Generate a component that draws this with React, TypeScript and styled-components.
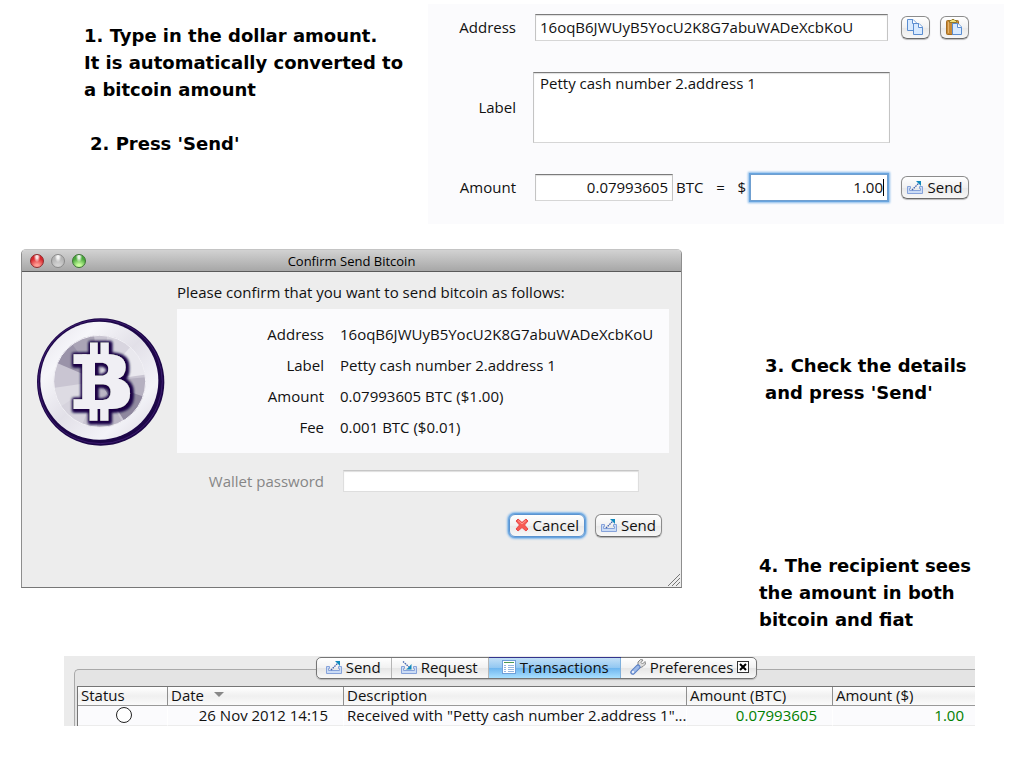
import React, { useId } from 'react';
import styled, { createGlobalStyle, css } from 'styled-components';

const GlobalStyle = createGlobalStyle`
  *, *::before, *::after { box-sizing: border-box; }
  body { margin: 0; background: #fff; color: #111; font: 15px/20px "Open Sans", "Noto Sans", sans-serif; }
  input, textarea, button { font: inherit; color: inherit; margin: 0; }
  svg { display: block; flex: none; }
`;

/* ---------- layout ---------- */

const Page = styled.main`
  padding: 4px 20px 42px 21px;
`;

const SendStep = styled.section`
  display: flex;
`;

const SendNotes = styled.div`
  flex: 0 0 407px;
  padding: 18px 0 0 63px;
`;

const Note = styled.p<{ $indent?: number; $top?: number }>`
  margin: ${p => p.$top || 0}px 0 0 ${p => p.$indent || 0}px;
  font: bold 18px/27px "DejaVu Sans", Verdana, sans-serif;
  color: #000;
`;

const ConfirmStep = styled.section`
  display: flex;
  align-items: flex-start;
  margin-top: 25px;
`;

const ConfirmNotes = styled.div`
  flex: 1;
  padding: 103px 0 0 77px;
`;

/* ---------- shared controls ---------- */

const PushButton = styled.button<{ $focus?: boolean }>`
  display: flex;
  align-items: center;
  justify-content: center;
  gap: 4px;
  height: 23px;
  padding: 0 5px 1px;
  border: 1px solid #8c8c8c;
  border-bottom-color: #6a6a6a;
  border-radius: 6px;
  background: linear-gradient(#fff, #f1f1f1 50%, #e9e9e9 52%, #f7f7f7);
  box-shadow: 0 1px 1px #0004;
  white-space: nowrap;
  ${p => p.$focus && css`
    border-color: #5b93cf;
    box-shadow: 0 0 0 1px #69a5df, 0 0 2px 2px #86b9ea;
  `}
`;

const field = css`
  border: 1px solid #c4c4c4;
  border-top-color: #7b7b7b;
  border-bottom-color: #d6d6d6;
  border-radius: 0;
  outline: none;
  background: #fff;
  box-shadow: inset 0 1px 1px #0002;
`;

const TextField = styled.input<{ $right?: boolean; $focus?: boolean }>`
  ${field}
  width: 100%;
  min-width: 0;
  height: 27px;
  padding: 0 4px 2px;
  text-align: ${p => (p.$right ? 'right' : 'left')};
  ${p => p.$focus && css`
    border-color: #6f9fd0;
    box-shadow: 0 0 0 1px #69a5df, 0 0 2px 2px #86b9ea;
  `}
`;

/* ---------- send form ---------- */

const SendForm = styled.form`
  flex: 1;
  display: grid;
  grid-template-columns: 88px minmax(0, 1fr) 68px;
  gap: 31px 0;
  align-items: center;
  padding: 10px 35px 23px 0;
  background: #fbfbfd;
`;

const FormLabel = styled.label`
  padding-bottom: 2px;
  text-align: right;
`;

const FieldCell = styled.div<{ $wide?: boolean }>`
  display: flex;
  align-items: center;
  margin: 0 ${p => (p.$wide ? 11 : 13)}px 0 ${p => (p.$wide ? 17 : 19)}px;
`;

const LabelArea = styled.textarea`
  ${field}
  width: 100%;
  height: 71px;
  padding: 0 6px;
  resize: none;
`;

const AmountBox = styled.div`
  flex: 0 0 138px;
`;

const Units = styled.span`
  flex: none;
  display: flex;
  justify-content: space-between;
  width: 70px;
  margin: 0 4px 0 3px;
  padding-bottom: 2px;
`;

const FocusBox = styled.div`
  position: relative;
  flex: 1;
  min-width: 0;
  &::after {
    content: "";
    position: absolute;
    right: 4px;
    top: 5px;
    width: 1px;
    height: 17px;
    background: #000;
  }
`;

const ButtonPair = styled.div`
  display: flex;
  justify-content: space-between;
`;

/* ---------- confirm dialog ---------- */

const Dialog = styled.div`
  flex: 0 1 661px;
  position: relative;
  border: 1px solid #8e8e8e;
  border-bottom-color: #777;
  border-top-color: #c4c4c4;
  border-radius: 5px 5px 0 0;
  background: #ededed;
`;

const TitleBar = styled.header`
  display: grid;
  grid-template-columns: 1fr auto 1fr;
  align-items: center;
  height: 22px;
  padding: 0 8px;
  border-bottom: 1px solid #5a5a5a;
  border-radius: 4px 4px 0 0;
  background: linear-gradient(#d2d2d2, #a7a7a7);
`;

const DialogTitle = styled.h2`
  margin: 0;
  font-size: 13px;
  font-weight: normal;
  color: #000;
`;

const Lights = styled.div`
  display: flex;
  gap: 7px;
`;

const Light = styled.button<{ $color: string; $glow: string; $edge: string }>`
  width: 14px;
  height: 14px;
  padding: 0;
  border: 1px solid ${p => p.$edge};
  border-radius: 50%;
  background:
    radial-gradient(ellipse at 50% 15%, #fffd 0 12%, #fff0 38%),
    radial-gradient(circle at 50% 95%, ${p => p.$glow} 0 15%, ${p => p.$color} 65%);
`;

const DialogBody = styled.div`
  display: flex;
  padding: 0 12px 50px 15px;
`;

const LogoBox = styled.div`
  flex: 0 0 140px;
  padding-top: 46px;
`;

const DialogMain = styled.div`
  flex: 1;
  min-width: 0;
`;

const Prompt = styled.p`
  margin: 10px 0 7px;
`;

const Details = styled.dl`
  display: grid;
  grid-template-columns: 147px 1fr;
  column-gap: 16px;
  margin: 0;
  padding: 10px 0;
  background: #fbfbfd;
  line-height: 31px;
  dt { text-align: right; }
  dd { margin: 0; white-space: nowrap; }
`;

const PasswordRow = styled.div`
  display: grid;
  grid-template-columns: 147px 1fr;
  column-gap: 19px;
  align-items: center;
  margin-top: 17px;
  padding-right: 30px;
  color: #868686;
  label { padding: 0; }
  input {
    height: 22px;
    border-color: #dedede;
    border-top-color: #c6c6c6;
  }
`;

const DialogActions = styled.div`
  display: flex;
  justify-content: flex-end;
  gap: 10px;
  margin-top: 22px;
  padding-right: 7px;
`;

const Grip = styled.svg`
  position: absolute;
  right: 1px;
  bottom: 1px;
`;

/* ---------- transactions ---------- */

const Wallet = styled.section`
  margin: 23px 29px 0 43px;
  padding: 13px 0 0 10px;
  background: #ebebeb;
`;

const Pane = styled.div`
  border: solid #a9a9a9;
  border-width: 1px 0 0 1px;
  border-radius: 5px 0 0 0;
  padding-left: 2px;
  background: #e4e4e4;
`;

const TabBar = styled.nav`
  display: flex;
  width: max-content;
  height: 22px;
  margin: -13px auto 0;
  border: 1px solid #757575;
  border-radius: 5px;
  background: linear-gradient(#fff, #f1f1f1 50%, #e6e6e6 52%, #f8f8f8);
  box-shadow: 0 1px 1px #0003;
`;

const TabRow = styled.div`
  padding: 0 0 7px 21px;
`;

const Tab = styled.button<{ $active?: boolean }>`
  display: flex;
  align-items: center;
  gap: 4px;
  height: 20px;
  padding: 0 10px 2px 9px;
  border: 0;
  border-right: 1px solid #b5b5b5;
  background: none;
  line-height: 18px;
  white-space: nowrap;
  &:last-child { border-right: 0; padding-right: 7px; }
  ${p => p.$active && css`
    padding: 0 11px 2px 13px;
    border-color: #7fb0dc;
    background: linear-gradient(#c3e0f7, #93c8f2 48%, #6fb6ef 52%, #a9e0ff);
    box-shadow: 0 -1px 0 #34348c;
  `}
`;

const Ledger = styled.table`
  width: 100%;
  border-collapse: separate;
  border-spacing: 0;
  table-layout: fixed;
  border: solid #757575;
  border-width: 1px 0 0 1px;
  background: #fff;
  th, td {
    height: 19px;
    padding: 0 0 2px 3px;
    font-weight: normal;
    line-height: 16px;
    text-align: left;
    white-space: nowrap;
  }
  th {
    border-bottom: 1px solid #999;
    border-right: 1px solid #8f8f8f;
    background: linear-gradient(#fff, #f0f0f0 50%, #fafafa);
  }
  td {
    height: 20px;
    border-bottom: 1px solid #ececec;
    border-right: 1px solid #fff;
    background: #fbfbfd;
  }
  th:last-child, td:last-child { border-right: 0; }
`;

const Column = styled.col<{ $width?: number }>`
  width: ${p => (p.$width ? `${p.$width}px` : 'auto')};
`;

const NumberCell = styled.td<{ $pad: number; $green?: boolean }>`
  && {
    padding-right: ${p => p.$pad}px;
    text-align: right;
    color: ${p => (p.$green ? '#008000' : '#111')};
  }
`;

const StatusDot = styled.span`
  display: block;
  width: 16px;
  height: 16px;
  margin: 0 auto;
  border: 1px solid #222;
  border-radius: 50%;
  background: #fff;
`;

const SortMark = styled.span`
  display: inline-block;
  margin-left: 10px;
  vertical-align: 4px;
  border: solid transparent;
  border-width: 5px 5px 0;
  border-top-color: #888;
`;

/* ---------- drawings ---------- */

const Tray = () => (
  <path d="M.5 7.500V14.500H15.500V7.500H12.500V9.500H13.500V11.500H2.500V9.500H3.500V7.500Z" fill="#cbdcf5" stroke="#86a2da" />
);

const SendIcon = () => (
  <svg width="16" height="16" viewBox="0 0 16 16" aria-hidden="true">
    <Tray />
    <path d="M5 11L12 4" fill="none" stroke="#3f62b0" strokeWidth="1.300" strokeDasharray="1.600 .8" />
    <path d="M9 2H14V7L12.500 5.500L11 4Z" fill="#1089bd" />
  </svg>
);

const RequestIcon = () => (
  <svg width="16" height="16" viewBox="0 0 16 16" aria-hidden="true">
    <Tray />
    <path d="M2 2.500L8.500 8.500" fill="none" stroke="#3f62b0" strokeWidth="1.300" strokeDasharray="1.600 .8" />
    <path d="M10.500 5V10.500H5L7.500 8.500Z" fill="#1089bd" />
  </svg>
);

const Sheet = ({ x, y }: { x: number; y: number }) => (
  <g transform={`translate(${x} ${y})`}>
    <path d="M.5 .5H6L9.500 4V11.500H.5Z" fill="#d8eaff" stroke="#5b8dd0" />
    <path d="M5.500 .5V4.500H9.500" fill="#fff" stroke="#5b8dd0" />
  </g>
);

const CopyIcon = () => (
  <svg width="17" height="17" viewBox="0 0 17 17" aria-hidden="true">
    <Sheet x={0} y={0} />
    <Sheet x={6} y={4} />
  </svg>
);

const PasteIcon = () => (
  <svg width="17" height="17" viewBox="0 0 17 17" aria-hidden="true">
    <rect x=".5" y="1.5" width="12" height="14" rx="1" fill="#c98a35" stroke="#a36c22" />
    <path d="M2.500 3V14" stroke="#e5b36a" />
    <path d="M3.500 3.500V1.500H5L6 .5H8L9 1.500H10.500V3.500Z" fill="#f2e27c" stroke="#94792a" />
    <Sheet x={6} y={4} />
  </svg>
);

const CancelIcon = () => (
  <svg width="14" height="14" viewBox="0 0 14 14" aria-hidden="true">
    <path d="M1 3L3 1L7 4.500L11 1L13 3L9.500 7L13 11L11 13L7 9.500L3 13L1 11L4.500 7Z" fill="#f85a52" stroke="#e84848" strokeLinejoin="round" />
    <path d="M3 2.500L7 6L11 2.500" fill="none" stroke="#ff9a90" />
  </svg>
);

const TableIcon = () => (
  <svg width="14" height="14" viewBox="0 0 14 14" aria-hidden="true">
    <rect x=".5" y=".5" width="13" height="13" fill="#fff" stroke="#6f9fd8" />
    <path d="M2 2.500H12" stroke="#4e9a52" />
    <path d="M2 5.500H4M6 5.500H12M2 7.500H4M6 7.500H12M2 9.500H4M6 9.500H12M2 11.500H4M6 11.500H12" stroke="#94b5e0" />
  </svg>
);

const WrenchIcon = () => (
  <svg width="16" height="16" viewBox="0 0 16 16" aria-hidden="true">
    <path d="M8 7.500L9.500 9L13 7.500L15.500 5L15 2.500L12.500 5L11 3.500L13 1L10.500 .5L8 3V6Z" fill="#ddd" stroke="#888" strokeLinejoin="round" />
    <path d="M2.800 13.200L8 8" stroke="#5a7fc4" strokeWidth="5" strokeLinecap="round" />
    <path d="M2.800 13.200L8 8" stroke="#9db9e8" strokeWidth="3" strokeLinecap="round" />
    <circle cx="3" cy="13" r="1" fill="#fff" />
  </svg>
);

const CloseIcon = () => (
  <svg width="12" height="12" viewBox="0 0 12 12" aria-hidden="true">
    <rect x=".5" y=".5" width="11" height="11" fill="#fff" stroke="#333" />
    <path d="M3 3L9 9M9 3L3 9" stroke="#000" strokeWidth="2" />
  </svg>
);

const Coin = () => (
  <svg width="128" height="128" viewBox="21 24 384 384" role="img" aria-label="Bitcoin">
    <defs>
      <linearGradient id="rim" x1="0" y1="0" x2="1" y2="1">
        <stop offset="0" stopColor="#e4e2ea" />
        <stop offset=".25" stopColor="#f6f6fa" />
        <stop offset=".5" stopColor="#e2e0e8" />
        <stop offset=".75" stopColor="#f3f3f8" />
        <stop offset="1" stopColor="#d9d7e0" />
      </linearGradient>
      <clipPath id="face"><circle cx="209" cy="214" r="138" /></clipPath>
      <filter id="halo" x="-20%" y="-20%" width="140%" height="140%">
        <feMorphology in="SourceAlpha" operator="dilate" radius="5" result="fat" />
        <feGaussianBlur in="fat" stdDeviation="4" result="soft" />
        <feOffset in="soft" dx="3" dy="3" result="cast" />
        <feFlood floodColor="#1c0646" />
        <feComposite in2="cast" operator="in" result="shade" />
        <feMerge><feMergeNode in="shade" /><feMergeNode in="shade" /><feMergeNode in="SourceGraphic" /></feMerge>
      </filter>
    </defs>
    <circle cx="212" cy="216" r="191" fill="#1c0648" />
    <circle cx="211" cy="215" r="186" fill="none" stroke="#4b2480" strokeWidth="2" />
    <circle cx="208" cy="212" r="177" fill="url(#rim)" />
    <g clipPath="url(#face)">
      <rect x="60" y="70" width="300" height="300" fill="#c9c5d2" />
      <path d="M209 214L60 150L120 80Z" fill="#9a93a9" />
      <path d="M209 214L110 80L190 60Z" fill="#aaa4b6" />
      <path d="M209 214L235 60L330 100Z" fill="#d8d5df" />
      <path d="M209 214L320 90L370 190Z" fill="#e9e8ee" />
      <path d="M209 214L370 200L370 280Z" fill="#b5b0c0" />
      <path d="M209 214L370 270L300 360Z" fill="#8f889f" />
      <path d="M209 214L290 360L200 370Z" fill="#bbb6c5" />
      <path d="M209 214L150 360L60 300Z" fill="#d6d3dd" />
      <path d="M209 214L60 235L60 310Z" fill="#dddbe3" />
    </g>
    <circle cx="209" cy="214" r="138" fill="none" stroke="#f2f1f6" strokeWidth="3" />
    <mask id="counters">
      <rect x="100" y="80" width="240" height="270" fill="#fff" />
      <path d="M195 158H218Q235 160 235 177Q235 194 218 197H195Z" fill="#000" />
      <path d="M195 223H220Q242 225 242 246Q242 267 220 270H195Z" fill="#000" />
    </mask>
    <g filter="url(#halo)">
      <g mask="url(#counters)" fill="#f0eff4">
        <rect x="180" y="98" width="23" height="50" />
        <rect x="212" y="98" width="24" height="50" />
        <rect x="179" y="285" width="23" height="47" />
        <rect x="211" y="285" width="24" height="47" />
        <path d="M131 133H170V162H131Z" />
        <path d="M131 268H170V297H131Z" />
        <rect x="157" y="133" width="60" height="164" />
        <path d="M200 133H240Q287 136 287 172Q287 200 262 207V220H200Z" />
        <path d="M200 205H258Q300 212 300 250Q300 295 246 297H200Z" />
      </g>
    </g>
  </svg>
);

const details = [
  ['Address', '16oqB6JWUyB5YocU2K8G7abuWADeXcbKoU'],
  ['Label', 'Petty cash number 2.address 1'],
  ['Amount', '0.07993605 BTC ($1.00)'],
  ['Fee', '0.001 BTC ($0.01)'],
];

export default function App() {
  const id = useId();
  return (
    <>
      <GlobalStyle />
      <Page>
        <SendStep>
          <SendNotes>
            <Note>1. Type in the dollar amount.<br />It is automatically converted to<br />a bitcoin amount</Note>
            <Note $indent={6} $top={27}>2. Press 'Send'</Note>
          </SendNotes>
          <SendForm onSubmit={e => e.preventDefault()}>
            <FormLabel htmlFor={`${id}a`}>Address</FormLabel>
            <FieldCell><TextField id={`${id}a`} defaultValue={details[0][1]} /></FieldCell>
            <ButtonPair>
              <PushButton type="button" aria-label="Copy address"><CopyIcon /></PushButton>
              <PushButton type="button" aria-label="Paste address"><PasteIcon /></PushButton>
            </ButtonPair>
            <FormLabel htmlFor={`${id}l`}>Label</FormLabel>
            <FieldCell $wide><LabelArea id={`${id}l`} defaultValue={details[1][1]} /></FieldCell>
            <span />
            <FormLabel htmlFor={`${id}b`}>Amount</FormLabel>
            <FieldCell>
              <AmountBox><TextField id={`${id}b`} $right defaultValue="0.07993605" /></AmountBox>
              <Units><span>BTC</span><span>=</span><label htmlFor={`${id}d`}>$</label></Units>
              <FocusBox><TextField id={`${id}d`} $right $focus defaultValue="1.00" /></FocusBox>
            </FieldCell>
            <PushButton><SendIcon />Send</PushButton>
          </SendForm>
        </SendStep>

        <ConfirmStep>
          <Dialog role="dialog" aria-labelledby={`${id}t`}>
            <TitleBar>
              <Lights>
                <Light aria-label="Close" $color="#d8262c" $glow="#ff9d94" $edge="#8e2a2c" />
                <Light aria-label="Minimize" $color="#b4b4b4" $glow="#d2d2d2" $edge="#8a8a8a" />
                <Light aria-label="Zoom" $color="#4aa83c" $glow="#c8ff9c" $edge="#3c7434" />
              </Lights>
              <DialogTitle id={`${id}t`}>Confirm Send Bitcoin</DialogTitle>
            </TitleBar>
            <DialogBody>
              <LogoBox><Coin /></LogoBox>
              <DialogMain>
                <Prompt>Please confirm that you want to send bitcoin as follows:</Prompt>
                <Details>
                  {details.map(([name, value]) => (
                    <React.Fragment key={name}><dt>{name}</dt><dd>{value}</dd></React.Fragment>
                  ))}
                </Details>
                <PasswordRow>
                  <FormLabel htmlFor={`${id}p`}>Wallet password</FormLabel>
                  <TextField id={`${id}p`} type="password" />
                </PasswordRow>
                <DialogActions>
                  <PushButton $focus><CancelIcon />Cancel</PushButton>
                  <PushButton><SendIcon />Send</PushButton>
                </DialogActions>
              </DialogMain>
            </DialogBody>
            <Grip width="12" height="12" viewBox="0 0 12 12" aria-hidden="true">
              <path d="M0 12L12 0M4 12L12 4M8 12L12 8" stroke="#777" />
            </Grip>
          </Dialog>
          <ConfirmNotes>
            <Note $indent={6}>3. Check the details<br />and press 'Send'</Note>
            <Note $top={146}>4. The recipient sees<br />the amount in both<br />bitcoin and fiat</Note>
          </ConfirmNotes>
        </ConfirmStep>

        <Wallet>
          <Pane>
            <TabRow>
              <TabBar>
                <Tab><SendIcon />Send</Tab>
                <Tab><RequestIcon />Request</Tab>
                <Tab $active aria-current="page"><TableIcon />Transactions</Tab>
                <Tab><WrenchIcon />Preferences<CloseIcon /></Tab>
              </TabBar>
            </TabRow>
            <Ledger>
              <colgroup>
                <Column $width={90} /><Column $width={176} /><Column />
                <Column $width={146} /><Column $width={142} />
              </colgroup>
              <thead>
                <tr>
                  <th>Status</th><th>Date<SortMark /></th><th>Description</th>
                  <th>Amount (BTC)</th><th>Amount ($)</th>
                </tr>
              </thead>
              <tbody>
                <tr>
                  <td><StatusDot /></td>
                  <NumberCell $pad={15}>26 Nov 2012 14:15</NumberCell>
                  <td>Received with "Petty cash number 2.address 1"...</td>
                  <NumberCell $pad={15} $green>0.07993605</NumberCell>
                  <NumberCell $pad={11} $green>1.00</NumberCell>
                </tr>
              </tbody>
            </Ledger>
          </Pane>
        </Wallet>
      </Page>
    </>
  );
}
